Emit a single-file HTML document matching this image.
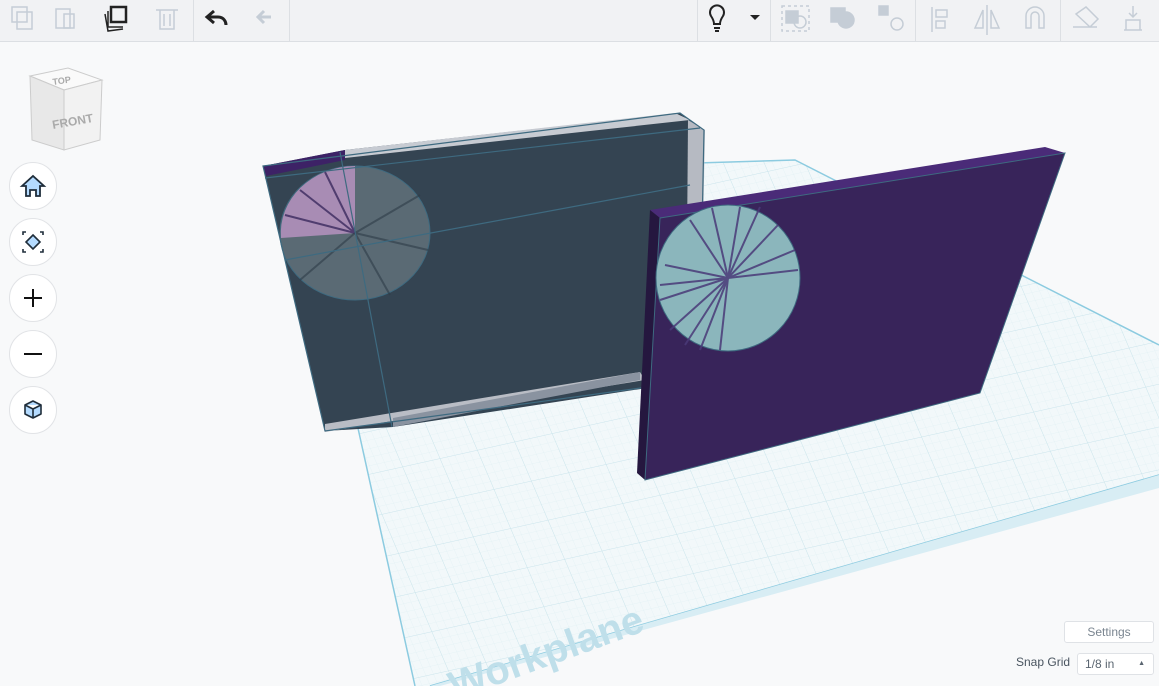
<!DOCTYPE html>
<html><head><meta charset="utf-8"><style>
body{margin:0;width:1159px;height:686px;overflow:hidden;background:#f8f9fa;font-family:"Liberation Sans",sans-serif;position:relative}
#tb{position:absolute;left:0;top:0;width:1159px;height:41px;background:#f1f2f4;border-bottom:1px solid #dcdfe3}
.sep{position:absolute;top:0;width:1px;height:41px;background:#dcdfe3}
.btn{position:absolute;width:48px;height:48px;border-radius:50%;background:#fff;border:1px solid #e1e3e6;left:9px;box-sizing:border-box}
.box{position:absolute;background:#fff;border:1px solid #dfe2e6;border-radius:3px;font-size:12px;color:#5a6570;box-sizing:border-box}
</style></head><body>
<svg width="1159" height="686" style="position:absolute;left:0;top:0">
<defs>
<pattern id="g" width="8" height="8" patternUnits="userSpaceOnUse" patternTransform="skewX(12) rotate(-12)">
<path d="M8 0V8M0 8H8" stroke="#dcedf2" stroke-width="0.5" fill="none"/></pattern>
<pattern id="g2" width="40" height="40" patternUnits="userSpaceOnUse" patternTransform="skewX(12) rotate(-12)">
<path d="M40 0V40M0 40H40" stroke="#c4e1ea" stroke-width="0.8" fill="none"/></pattern>
</defs>
<polygon points="302,175 795,160 1159,345 1159,475 430,686 415,686" fill="#f2f8fa"/>
<polygon points="302,175 795,160 1159,345 1159,475 430,686 415,686" fill="url(#g)"/>
<polygon points="302,175 795,160 1159,345 1159,475 430,686 415,686" fill="url(#g2)"/>
<polyline points="415,686 302,175 795,160 1159,345" fill="none" stroke="#8ccbe0" stroke-width="1.5"/>
<polyline points="430,686 1159,475" fill="none" stroke="#8ccbe0" stroke-width="1.5"/>
<polygon points="440,686 1159,488 1159,475 430,686" fill="#d8edf4"/>
<text x="455" y="700" transform="rotate(-20 455 700)" font-size="40" font-weight="bold" fill="#bfdfea" font-family="Liberation Sans">Workplane</text>
<!-- left objects -->
<polygon points="263,166 345,150 680,113 704,130 699,380 393,427 325,431" fill="#344452"/>
<polygon points="263,166 345,150 345,160 266,176" fill="#3d2266"/>
<polygon points="345,150 675,113 690,120 345,158" fill="#c7cbd2"/>
<polygon points="688,120 705,130 700,380 686,372" fill="#b6bac2"/>
<polygon points="325,424 640,372 645,380 325,432" fill="#b9bdc5"/>
<polygon points="393,418 640,372 640,380 393,427" fill="#8a93a0"/>
<ellipse cx="355" cy="233" rx="75" ry="67" fill="#5a6a74" stroke="#3e6a80"/>
<path d="M355 233 L355 166 A75 67 0 0 0 281 238 Z" fill="#a88cb4"/>
<g stroke="#3b2a5e" stroke-width="2" opacity="0.8">
<line x1="355" y1="233" x2="300" y2="190"/><line x1="355" y1="233" x2="285" y2="215"/><line x1="355" y1="233" x2="325" y2="172"/>
</g>
<g stroke="#2e3c48" stroke-width="2" opacity="0.6">
<line x1="355" y1="233" x2="420" y2="195"/><line x1="355" y1="233" x2="428" y2="250"/><line x1="355" y1="233" x2="390" y2="295"/><line x1="355" y1="233" x2="300" y2="280"/>
</g>
<g stroke="#3e6a80" fill="none" stroke-width="1.2">
<polygon points="263,166 680,113 704,130 699,380 325,431"/>
<line x1="340" y1="152" x2="392" y2="427"/>
<line x1="265" y1="178" x2="700" y2="128"/>
<line x1="285" y1="260" x2="690" y2="185"/>
</g>
<!-- right panel -->
<polygon points="650,210 1045,147 1065,153 660,218" fill="#4a2b78"/>
<polygon points="650,210 660,218 645,480 637,473" fill="#25173f"/>
<polygon points="660,218 1065,153 980,393 645,480" fill="#38245a" stroke="#3e6a80"/>
<ellipse cx="728" cy="278" rx="72" ry="73" fill="#8bb6bc" stroke="#3e6a80"/>
<g stroke="#4a3a78" stroke-width="2" opacity="0.85">
<line x1="728" y1="278" x2="760" y2="207"/><line x1="728" y1="278" x2="660" y2="300"/>
<line x1="728" y1="278" x2="700" y2="350"/><line x1="728" y1="278" x2="795" y2="250"/>
<line x1="728" y1="278" x2="670" y2="330"/><line x1="728" y1="278" x2="740" y2="207"/>
<line x1="728" y1="278" x2="665" y2="265"/><line x1="728" y1="278" x2="712" y2="208"/>
<line x1="728" y1="278" x2="690" y2="220"/><line x1="728" y1="278" x2="720" y2="350"/>
<line x1="728" y1="278" x2="660" y2="285"/><line x1="728" y1="278" x2="798" y2="270"/>
<line x1="728" y1="278" x2="685" y2="345"/><line x1="728" y1="278" x2="778" y2="225"/>
</g>
</svg>
<div id="tb">
<div class="sep" style="left:193px"></div><div class="sep" style="left:289px"></div>
<div class="sep" style="left:697px"></div><div class="sep" style="left:770px"></div><div class="sep" style="left:915px"></div><div class="sep" style="left:1060px"></div>
<svg width="1159" height="41" style="position:absolute;left:0;top:0" fill="none" stroke-width="1.5">
<g stroke="#c5cdd6"><rect x="12" y="7" width="15" height="15"/><rect x="17" y="12" width="15" height="17"/>
<rect x="56" y="9" width="14" height="19"/><rect x="64" y="14" width="10" height="14"/>
<path d="M156 10h22M160 10v19h14v-19M164 14v12M170 14v12"/>
<path d="M271 17h-12M264 11l-6 6 6 6" stroke-width="3"/></g>
<g stroke="#222"><rect x="111" y="7" width="15" height="15" stroke-width="2.5"/><path d="M108 11v16h15M105 14l3 17 15-2"/>
<path d="M208 17h10c6 0 8 5 8 8M214 11l-7 6 7 6" stroke-width="3"/>
<path d="M711 16a7 7 0 1 1 12 0c-2 3-3 5-3 8h-6c0-3-1-5-3-8zM714 28h6M715 31h4" stroke-width="2"/></g>
<path d="M750 15l5 5 5-5z" fill="#222"/>
<g stroke="#c5cdd6"><rect x="782" y="6" width="27" height="25" stroke-dasharray="3 3"/><rect x="786" y="11" width="12" height="12" fill="#c5cdd6"/><circle cx="800" cy="22" r="6"/>
<rect x="831" y="8" width="14" height="14" fill="#c5cdd6"/><circle cx="846" cy="20" r="8" fill="#c5cdd6"/>
<rect x="879" y="6" width="9" height="9" fill="#c5cdd6"/><circle cx="897" cy="24" r="6"/>
<path d="M932 7v25M936 10h11v7h-11zM936 21h9v7h-9z"/><path d="M987 5v30M983 10l-8 18h8zM991 10l8 18h-8z"/>
<path d="M1026 28v-12a9 9 0 0 1 18 0v12h-5v-12a4 4 0 0 0-8 0v12z"/>
<path d="M1076 14l10-7 12 12-8 8zM1073 27h24" /><path d="M1126 20h14v10h-14zM1133 6v11M1129 13l4 4 4-4M1124 30h18"/></g>
</svg></div>
<svg width="90" height="100" style="position:absolute;left:20px;top:62px">
<polygon points="10,14 48,6 82,18 44,28" fill="#fafafa" stroke="#ccc"/>
<polygon points="44,28 82,18 80,78 44,88" fill="#f2f2f2" stroke="#ccc"/>
<polygon points="10,14 44,28 44,88 12,78" fill="#e8e8e8" stroke="#ccc"/>
<text x="33" y="23" font-size="9" fill="#aaa" font-weight="bold" transform="rotate(-8 33 23)">TOP</text>
<text x="33" y="67" font-size="12" fill="#aaa" font-weight="bold" transform="rotate(-10 33 67)">FRONT</text>
</svg>
<div class="btn" style="top:162px"><svg width="48" height="48"><path d="M13 24l11-10 11 10h-4v10h-4v-6h-6v6h-4v-10z" fill="#b4dbff" stroke="#1f2d3a" stroke-width="1.8" transform="translate(-1 -1)"/></svg></div>
<div class="btn" style="top:218px"><svg width="48" height="48"><path d="M24 17l7 7-7 7-7-7z" fill="#b4dbff" stroke="#1f2d3a" stroke-width="1.6" transform="translate(-1 -1)"/><path d="M14 17v-3h3M31 14h3v3M34 31v3h-3M17 34h-3v-3" stroke="#1f2d3a" stroke-width="1.6" fill="none" transform="translate(-1 -1)"/></svg></div>
<div class="btn" style="top:274px"><svg width="48" height="48"><path d="M23 14v18M14 23h18" stroke="#111" stroke-width="2"/></svg></div>
<div class="btn" style="top:330px"><svg width="48" height="48"><path d="M14 23h18" stroke="#111" stroke-width="2"/></svg></div>
<div class="btn" style="top:386px"><svg width="48" height="48"><path d="M23 14l8 4v9l-8 4-8-4v-9zM15 18l8 4 8-4M23 22v9" fill="#b4dbff" stroke="#1f2d3a" stroke-width="1.6" stroke-linejoin="round"/></svg></div>
<div class="box" style="left:1064px;top:621px;width:90px;height:22px;text-align:center;line-height:20px;color:#7a8590">Settings</div>
<div style="position:absolute;left:1016px;top:655px;font-size:12px;color:#4a5560">Snap Grid</div>
<div class="box" style="left:1077px;top:653px;width:77px;height:22px;line-height:20px;padding-left:7px">1/8 in<span style="position:absolute;right:8px;top:0;font-size:7px">▲</span></div>
</body></html>
